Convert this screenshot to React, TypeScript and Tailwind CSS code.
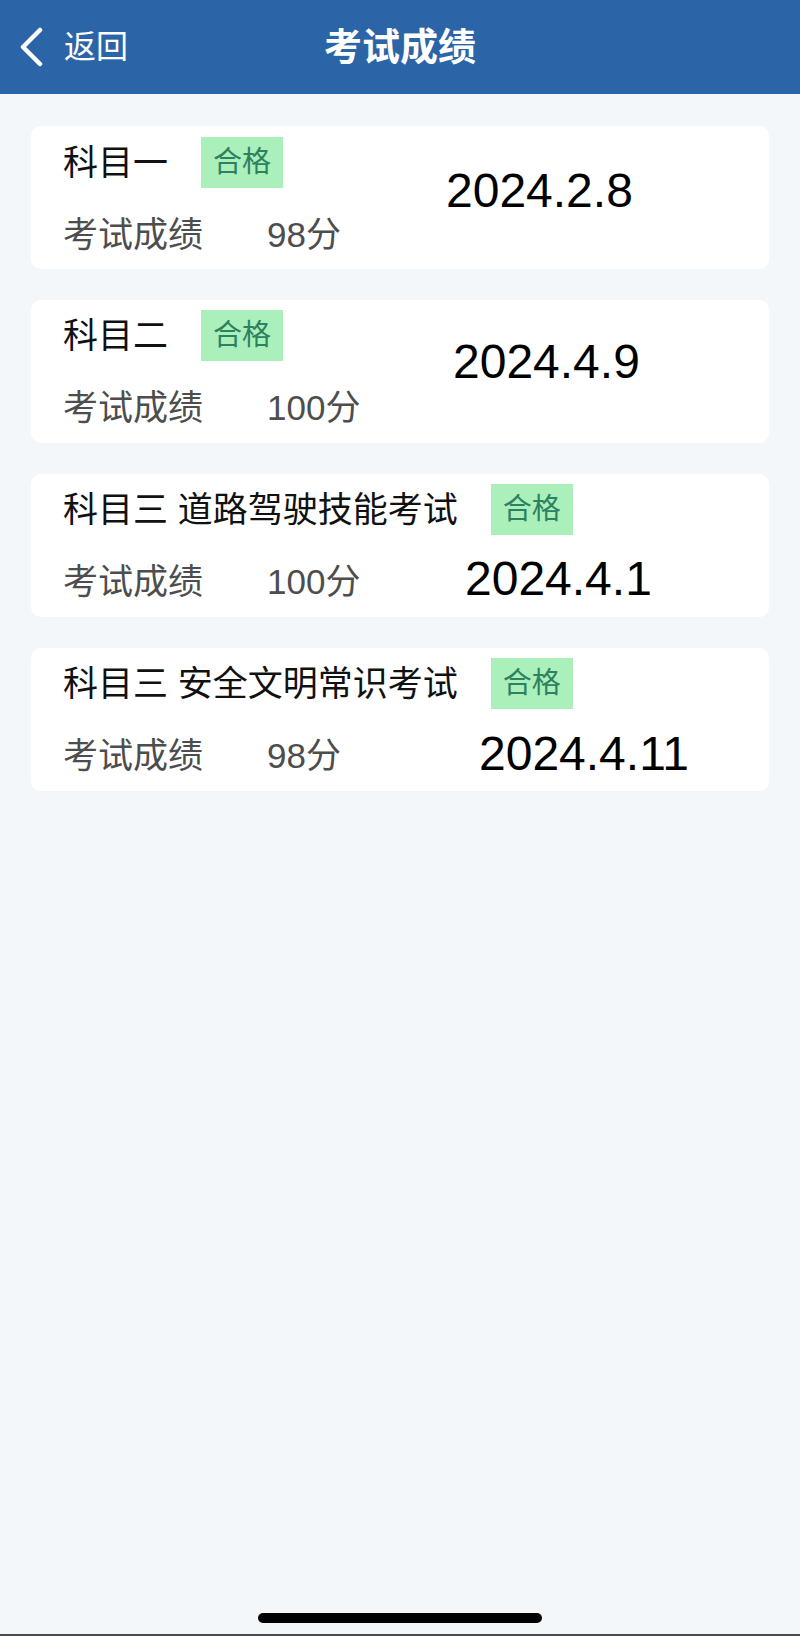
import React from "react";

const FONT = '"Liberation Sans", "Noto Sans CJK SC", sans-serif';

function Badge() {
  return (
    <div className="ml-[33px] h-[51px] w-[82px] flex items-center justify-center bg-[#abefbb] text-[#2c8160] text-[29px] leading-none">
      合格
    </div>
  );
}

function ScoreRow({ score }: { score: string }) {
  return (
    <div className="flex items-center text-[35px] leading-none text-[#4d4d4d]">
      <span className="w-[204px]">考试成绩</span>
      <span>{score}</span>
    </div>
  );
}

export default function App() {
  return (
    <div
      className="w-[800px] h-[1636px] bg-[#f3f7f9] flex flex-col"
      style={{ fontFamily: FONT }}
    >
      {/* Header */}
      <div className="h-[94px] bg-[#2b65a8] grid grid-cols-[1fr_auto_1fr] items-center text-white">
        <div className="flex items-center pl-[19px]">
          <svg width="24" height="40" viewBox="0 0 24 40" fill="none">
            <polyline
              points="21,3 4,20 21,37"
              stroke="white"
              strokeWidth="4.5"
              strokeLinecap="round"
              strokeLinejoin="round"
            />
          </svg>
          <span className="ml-[21px] text-[32px] leading-none">返回</span>
        </div>
        <div className="text-[38px] font-semibold leading-none">考试成绩</div>
        <div />
      </div>

      {/* Cards */}
      <div className="flex flex-col gap-[31px] px-[31px] pt-[32px]">
        {/* Card 1 */}
        <div className="h-[143px] bg-white rounded-[10px] pl-[32px] pt-[11px] grid grid-cols-[383px_1fr] grid-rows-[51px_50px] gap-y-[21px]">
          <div className="col-start-1 row-start-1 flex items-center">
            <span className="text-[35px] leading-none text-[#111]">科目一</span>
            <Badge />
          </div>
          <div className="col-start-1 row-start-2 flex items-center">
            <ScoreRow score="98分" />
          </div>
          <div className="col-start-2 row-start-1 row-span-2 self-start mt-[30px] text-[48px] leading-none text-black">
            2024.2.8
          </div>
        </div>

        {/* Card 2 */}
        <div className="h-[143px] bg-white rounded-[10px] pl-[32px] pt-[10px] grid grid-cols-[390px_1fr] grid-rows-[51px_50px] gap-y-[21px]">
          <div className="col-start-1 row-start-1 flex items-center">
            <span className="text-[35px] leading-none text-[#111]">科目二</span>
            <Badge />
          </div>
          <div className="col-start-1 row-start-2 flex items-center">
            <ScoreRow score="100分" />
          </div>
          <div className="col-start-2 row-start-1 row-span-2 self-start mt-[28px] text-[48px] leading-none text-black">
            2024.4.9
          </div>
        </div>

        {/* Card 3 */}
        <div className="h-[143px] bg-white rounded-[10px] pl-[32px] pt-[10px] grid grid-cols-[402px_1fr] grid-rows-[51px_50px] gap-y-[21px]">
          <div className="col-span-2 row-start-1 flex items-center">
            <span className="text-[35px] leading-none text-[#111]">科目三 道路驾驶技能考试</span>
            <Badge />
          </div>
          <div className="col-start-1 row-start-2 flex items-center">
            <ScoreRow score="100分" />
          </div>
          <div className="col-start-2 row-start-2 self-center mb-[4px] text-[48px] leading-none text-black">
            2024.4.1
          </div>
        </div>

        {/* Card 4 */}
        <div className="h-[143px] bg-white rounded-[10px] pl-[32px] pt-[10px] grid grid-cols-[416px_1fr] grid-rows-[51px_50px] gap-y-[21px]">
          <div className="col-span-2 row-start-1 flex items-center">
            <span className="text-[35px] leading-none text-[#111]">科目三 安全文明常识考试</span>
            <Badge />
          </div>
          <div className="col-start-1 row-start-2 flex items-center">
            <ScoreRow score="98分" />
          </div>
          <div className="col-start-2 row-start-2 self-center mb-[2px] text-[48px] leading-none text-black">
            2024.4.11
          </div>
        </div>
      </div>

      <div className="flex-1" />
      {/* Home indicator */}
      <div className="flex justify-center pb-[11px]">
        <div className="w-[284px] h-[10px] rounded-full bg-black" />
      </div>
      <div className="h-[2px] bg-[#4a4a4a]" />
    </div>
  );
}
